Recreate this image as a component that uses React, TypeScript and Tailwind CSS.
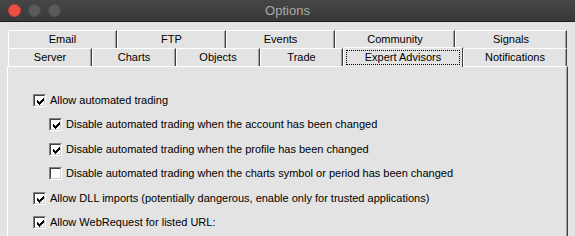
import React from "react";

const font = { fontFamily: '"Liberation Sans", Arial, sans-serif' };

const CHECK = [
  "......X",
  ".....XX",
  "X...XXX",
  "XX.XXX.",
  "XXXXX..",
  ".XXX...",
  "..X....",
];

function Check() {
  const rects: React.ReactNode[] = [];
  CHECK.forEach((row, y) =>
    row.split("").forEach((c, x) => {
      if (c === "X") rects.push(<rect key={`${x}-${y}`} x={x} y={y} width={1} height={1} fill="#000" />);
    })
  );
  return (
    <svg width="7" height="7" viewBox="0 0 7 7" shapeRendering="crispEdges" className="absolute left-[3px] top-[3px]">
      {rects}
    </svg>
  );
}

function Box({ checked }: { checked: boolean }) {
  return (
    <span className="relative block w-[13px] h-[13px] shrink-0 border border-t-[#808080] border-l-[#808080] border-b-white border-r-white">
      <span className="block w-full h-full border border-t-[#404040] border-l-[#404040] border-b-[#d4d0c8] border-r-[#d4d0c8] bg-white" />
      {checked && <Check />}
    </span>
  );
}

function Row({ label, checked, indent }: { label: string; checked: boolean; indent?: boolean }) {
  return (
    <div className={`flex items-center h-[24.5px] ${indent ? "pl-[16px]" : ""}`}>
      <Box checked={checked} />
      <span className="ml-[4px] text-[11px] text-black leading-none whitespace-nowrap">{label}</span>
    </div>
  );
}

function Tab({ label, w, selected }: { label: string; w: number; selected?: boolean }) {
  if (selected) {
    return (
      <div
        className="relative z-10 h-[20px] -mb-[1px] -mt-[2px] bg-[#e3e3e3] border-l border-t border-l-white border-t-white border-r border-r-[#404040] rounded-tl-[2px] flex items-start justify-center pt-[2px] px-[2px]"
        style={{ width: w }}
      >
        <div className="w-full h-[15px] border border-dotted border-black flex items-center justify-center text-[11px] leading-none text-black">
          {label}
        </div>
      </div>
    );
  }
  return (
    <div
      className="h-[18px] bg-[#e3e3e3] border-l border-t border-l-white border-t-white border-r border-r-[#404040] shadow-[inset_-1px_0_0_#a0a0a0] rounded-tl-[2px] flex items-center justify-center text-[11px] leading-none text-black"
      style={{ width: w }}
    >
      {label}
    </div>
  );
}

export default function App() {
  return (
    <div className="w-[575px] h-[236px] overflow-hidden bg-[#e3e3e3] flex flex-col" style={font}>
      <div className="h-[22px] shrink-0 bg-[linear-gradient(to_bottom,#464646,#393939)] border-b border-b-[#1c1c1c] grid grid-cols-[1fr_auto_1fr] items-center">
        <div className="flex items-center gap-[7px] pl-[8px]">
          <span className="block w-[13px] h-[13px] rounded-full bg-[#ee5048] border border-[#d03c35]" />
          <span className="block w-[13px] h-[13px] rounded-full bg-[#5b5b5b] border border-[#4e4e4e]" />
          <span className="block w-[13px] h-[13px] rounded-full bg-[#5b5b5b] border border-[#4e4e4e]" />
        </div>
        <div className="text-[13px] text-[#a9a9a9] leading-none">Options</div>
        <div />
      </div>
      <div className="flex-1 flex flex-col pl-[7px] pt-[8px] w-[568px]">
        <div className="flex pl-[1px]">
          <Tab label="Email" w={109} />
          <Tab label="FTP" w={109} />
          <Tab label="Events" w={109} />
          <Tab label="Community" w={120} />
          <Tab label="Signals" w={112} />
        </div>
        <div className="flex items-end pl-[1px]">
          <Tab label="Server" w={84} />
          <Tab label="Charts" w={84} />
          <Tab label="Objects" w={84} />
          <Tab label="Trade" w={83} />
          <Tab label="Expert Advisors" w={120} selected />
          <Tab label="Notifications" w={104} />
        </div>
        <div className="flex-1 border-l border-t border-l-white border-t-white border-r border-r-[#404040] shadow-[inset_-1px_0_0_#a0a0a0] pl-[25px] pt-[21px]">
          <Row label="Allow automated trading" checked />
          <Row label="Disable automated trading when the account has been changed" checked indent />
          <Row label="Disable automated trading when the profile has been changed" checked indent />
          <Row label="Disable automated trading when the charts symbol or period has been changed" checked={false} indent />
          <Row label="Allow DLL imports (potentially dangerous, enable only for trusted applications)" checked />
          <Row label="Allow WebRequest for listed URL:" checked />
        </div>
      </div>
    </div>
  );
}
